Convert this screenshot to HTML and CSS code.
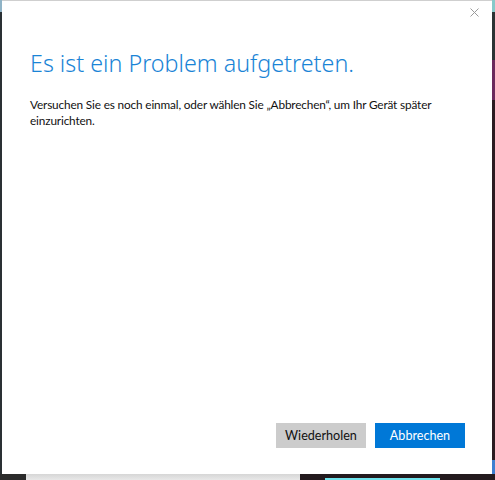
FILE: index.html
```html
<!DOCTYPE html>
<html lang="de">
<head>
    <meta charset="UTF-8">
    <meta name="viewport" content="width=device-width, initial-scale=1.0">
    <title>Problem</title>
    <link rel="stylesheet" href="styles.css">
</head>
<body>
    <div class="screen">
        <div class="edge-left"></div>
        <div class="dialog">
            <div class="dialog-top">
                <button class="close" type="button" aria-label="Schließen">
                    <svg width="9" height="9" viewBox="0 0 9 9"><path d="M0.5 0.5L8.5 8.5M8.5 0.5L0.5 8.5" stroke="#9a9a9a" stroke-width="1" fill="none"/></svg>
                </button>
            </div>
            <h1 class="title">Es ist ein Problem aufgetreten.</h1>
            <p class="message">Versuchen Sie es noch einmal, oder wählen Sie „Abbrechen“, um Ihr Gerät später einzurichten.</p>
            <div class="actions">
                <button class="btn btn-secondary" type="button">Wiederholen</button>
                <button class="btn btn-primary" type="button">Abbrechen</button>
            </div>
        </div>
        <div class="edge-right">
            <div class="seg-teal"></div>
            <div class="seg-dark"></div>
            <div class="seg-purple"></div>
            <div class="seg-brown"></div>
            <div class="seg-blue"></div>
        </div>
    </div>
    <div class="taskbar">
        <div class="tb-dark"></div>
        <div class="tb-grey"></div>
        <div class="tb-app"><span class="tb-active"></span></div>
    </div>
</body>
</html>
```
FILE: styles.css
```css
body {
    margin: 0;
    background-color: #262a2d;
    font-family: "Noto Sans", "Open Sans", sans-serif;
}
.screen {
    display: flex;
    height: 474px;
}
.edge-left {
    width: 2px;
    background: linear-gradient(#8fb3c6 0, #8fb3c6 12px, #2a3034 12px);
}
.dialog {
    width: 490px;
    background-color: #fff;
    border-top: 1px solid #cfcfcf;
    box-sizing: border-box;
    display: flex;
    flex-direction: column;
    padding: 0 27px 26px 28px;
}
.dialog-top {
    display: flex;
    justify-content: flex-end;
    height: 45px;
    margin-right: -14px;
}
.close {
    background: none;
    border: none;
    padding: 0;
    width: 9px;
    height: 9px;
    margin-top: 7px;
    line-height: 0;
}
.title {
    margin: 0;
    font-size: 23.3px;
    font-weight: 300;
    color: #1a84d6;
    line-height: 34px;
}
.message {
    margin: 17px 0 0;
    font-family: Lato, "Noto Sans", sans-serif;
    font-size: 11.8px;
    letter-spacing: -0.15px;
    line-height: 16px;
    color: #111;
}
.actions {
    margin-top: auto;
    display: flex;
    justify-content: flex-end;
    gap: 9px;
}
.btn {
    width: 90px;
    height: 25px;
    border: none;
    font-family: Lato, "Noto Sans", sans-serif;
    font-size: 12.6px;
    padding: 0;
}
.btn-secondary {
    background-color: #cccccc;
    color: #111;
}
.btn-primary {
    background-color: #0078d7;
    color: #fff;
}
.edge-right {
    width: 3px;
    display: flex;
    flex-direction: column;
}
.seg-teal { height: 12px; background-color: #86c9c9; }
.seg-dark { height: 48px; background-color: #2b3334; }
.seg-purple { height: 40px; background-color: #6b2a5c; }
.seg-brown { flex: 1; background-color: #2c1b21; }
.seg-blue { height: 14px; background-color: #3d7fd0; }
.taskbar {
    display: flex;
    height: 6px;
}
.tb-dark {
    width: 26px;
    background-color: #2b2b2b;
}
.tb-grey {
    width: 274px;
    background: linear-gradient(#d6d6d6, #e8e8e8);
}
.tb-app {
    flex: 1;
    background-color: #231a1e;
    padding-left: 25px;
}
.tb-active {
    display: block;
    width: 115px;
    height: 2px;
    margin-top: 4px;
    background-color: #6fe3ec;
}
```
